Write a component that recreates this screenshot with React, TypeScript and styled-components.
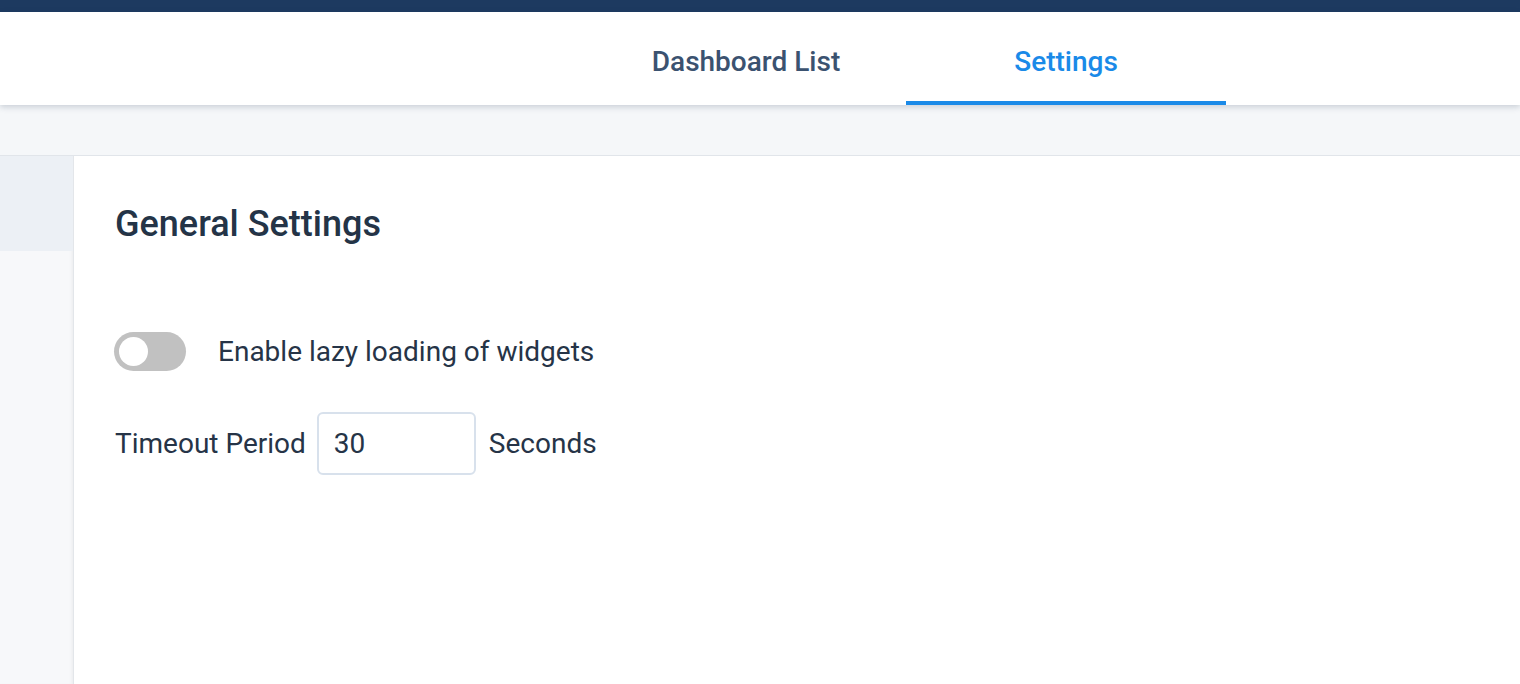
import React, { useState } from 'react';
import styled, { createGlobalStyle } from 'styled-components';

const GlobalStyle = createGlobalStyle`
    html, body {
        margin: 0;
        padding: 0;
        height: 100%;
        overflow: hidden;
    }
    body {
        font-family: Roboto, "Liberation Sans", sans-serif;
        background: #ffffff;
    }
    #root {
        height: 100%;
    }
`

type TabPropsType = {
    active?: boolean
}

const tabs = ['Dashboard List', 'Settings']

const App = () => {
    const [active, setActive] = useState(1)
    const [lazy, setLazy] = useState(false)
    const [timeout, setTimeoutValue] = useState('30')

    return (
        <Page>
            <GlobalStyle/>
            <TopBar/>
            <Header>
                <Tabs>
                    {tabs.map((t, i) => (
                        <Tab key={t} active={i === active} onClick={() => setActive(i)}>{t}</Tab>
                    ))}
                </Tabs>
            </Header>
            <SubBar/>
            <Body>
                <Sidebar>
                    <SideItem/>
                </Sidebar>
                <Content>
                    <Title>General Settings</Title>
                    <ToggleRow>
                        <Switch on={lazy} onClick={() => setLazy(!lazy)}>
                            <Knob on={lazy}/>
                        </Switch>
                        <Label>Enable lazy loading of widgets</Label>
                    </ToggleRow>
                    <TimeoutRow>
                        <Label>Timeout Period</Label>
                        <Input value={timeout} onChange={e => setTimeoutValue(e.target.value)}/>
                        <Label>Seconds</Label>
                    </TimeoutRow>
                </Content>
            </Body>
        </Page>
    );
};

export default App;

const Page = styled.div`
    display: flex;
    flex-direction: column;
    height: 100vh;
    background: #fff;
`
const TopBar = styled.div`
    height: 12px;
    background: #1d3a60;
    flex-shrink: 0;
`
const Header = styled.div`
    height: 93px;
    background: #fff;
    box-shadow: 0 2px 6px rgba(40, 60, 90, 0.22);
    position: relative;
    z-index: 2;
    flex-shrink: 0;
    display: flex;
`
const Tabs = styled.div`
    display: flex;
    margin-left: 586px;
`
const Tab = styled.div<TabPropsType>`
    width: 320px;
    display: flex;
    align-items: center;
    justify-content: center;
    font-size: 28px;
    font-weight: 500;
    color: ${props => props.active ? '#1a8ae8' : '#3b5270'};
    border-bottom: 4px solid ${props => props.active ? '#1a8ae8' : 'transparent'};
    box-sizing: border-box;
    padding-top: 10px;
    cursor: pointer;
`
const SubBar = styled.div`
    height: 50px;
    background: #f5f7f9;
    border-bottom: 1px solid #e1e5ea;
    flex-shrink: 0;
`
const Body = styled.div`
    flex: 1;
    display: flex;
`
const Sidebar = styled.div`
    width: 73px;
    background: #f7f8fa;
    border-right: 1px solid #e3e6ea;
    box-shadow: inset -3px 0 4px -3px rgba(0, 0, 0, 0.08);
    flex-shrink: 0;
`
const SideItem = styled.div`
    height: 95px;
    background: #ecf0f5;
`
const Content = styled.div`
    flex: 1;
    padding: 46px 41px;
    display: flex;
    flex-direction: column;
`
const Title = styled.h2`
    margin: 0;
    font-size: 36px;
    font-weight: 500;
    color: #243447;
    line-height: 44px;
`
const ToggleRow = styled.div`
    display: flex;
    align-items: center;
    gap: 32px;
    margin-top: 86px;
`
const Switch = styled.div<{ on: boolean }>`
    width: 72px;
    height: 39px;
    margin-left: -1px;
    border-radius: 20px;
    background: ${props => props.on ? '#1a8ae8' : '#c1c1c1'};
    padding: 5px;
    box-sizing: border-box;
    display: flex;
    justify-content: ${props => props.on ? 'flex-end' : 'flex-start'};
    cursor: pointer;
`
const Knob = styled.div<{ on: boolean }>`
    width: 29px;
    height: 29px;
    border-radius: 50%;
    background: #fff;
`
const Label = styled.span`
    font-size: 28px;
    color: #263447;
`
const TimeoutRow = styled.div`
    display: flex;
    align-items: center;
    gap: 11px;
    margin-top: 41px;
`
const Input = styled.input`
    width: 159px;
    height: 63px;
    box-sizing: border-box;
    border: 2px solid #d8e1ec;
    border-radius: 6px;
    padding: 0 15px;
    margin-right: 2px;
    font-family: Roboto, "Liberation Sans", sans-serif;
    font-size: 28px;
    color: #263447;
    outline: none;
`
